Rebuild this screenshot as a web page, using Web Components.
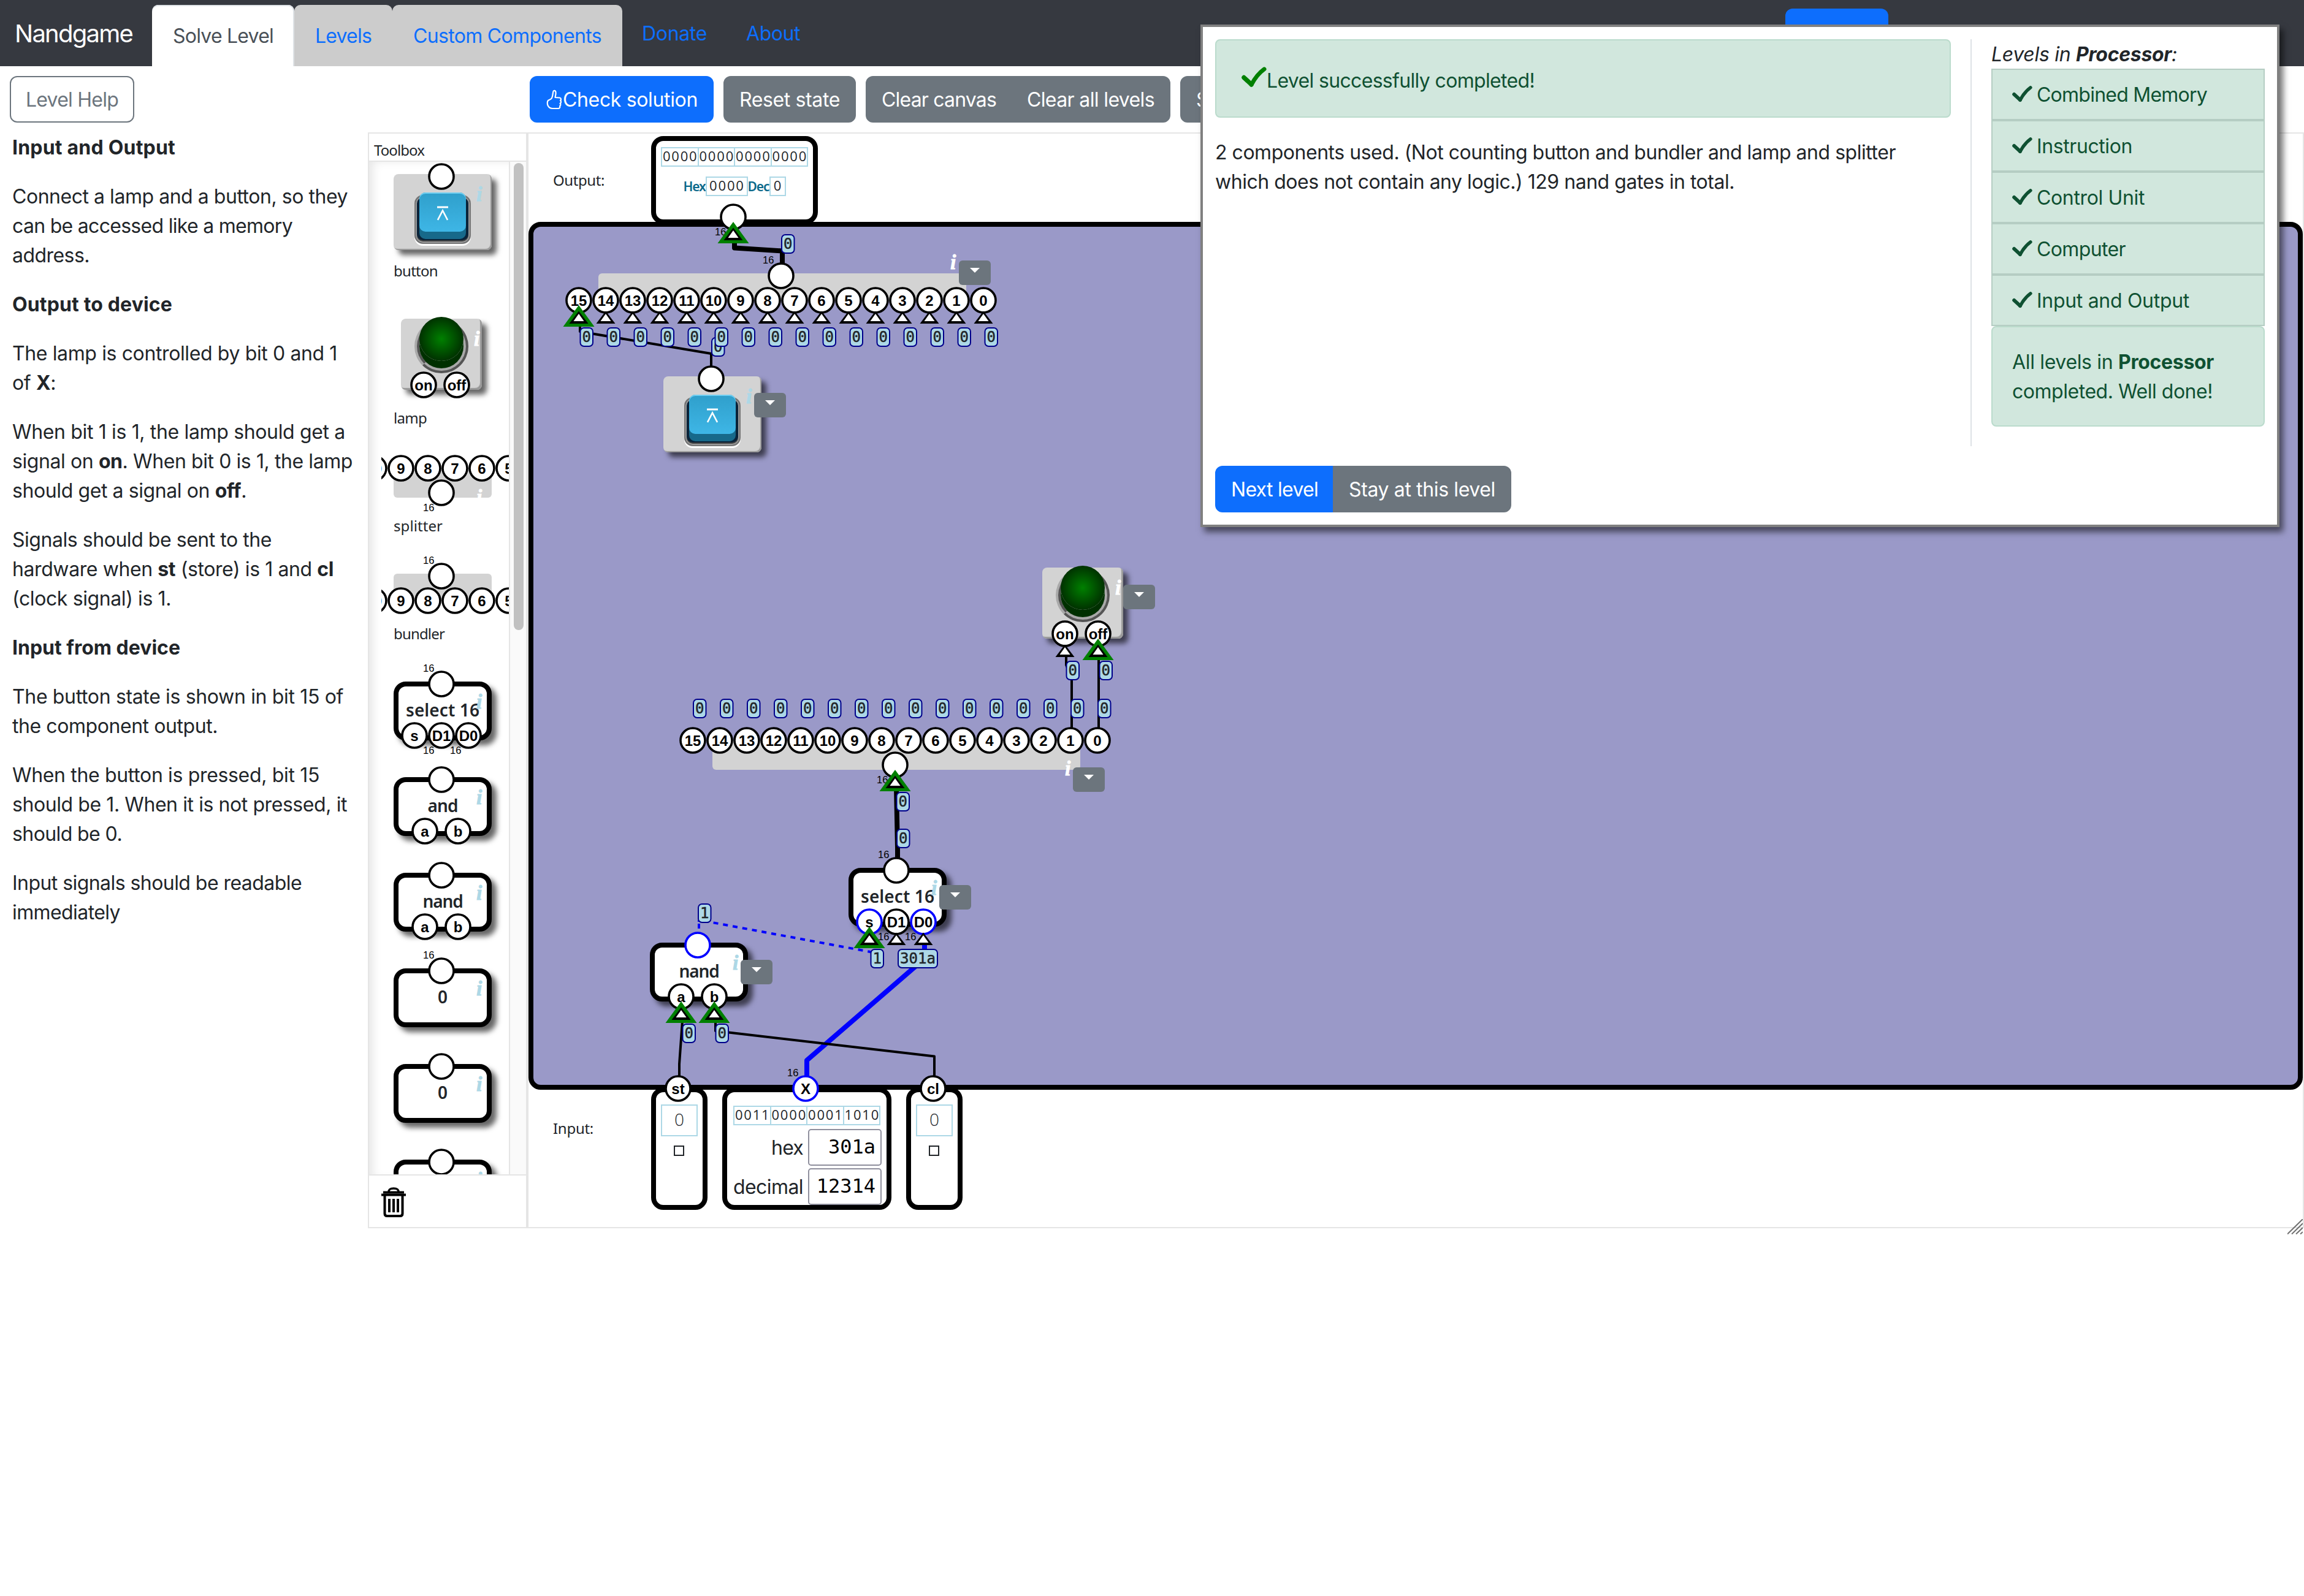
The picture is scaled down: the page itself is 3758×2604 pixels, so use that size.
<!DOCTYPE html>
<html lang="en">
<head>
<meta charset="utf-8">
<title>Nandgame</title>
<style>
html,body{margin:0;padding:0;background:#fff}
body{width:3758px;height:2604px;overflow:hidden;font-family:Inter,"Liberation Sans",sans-serif;font-size:32px;line-height:48px;color:#212529}
</style>
</head>
<body>
<nand-app></nand-app>

<script>
const make = (name, html, setup) => {
  const t = document.createElement('template');
  t.innerHTML = html;
  customElements.define(name, class extends HTMLElement {
    constructor() {
      super();
      this.attachShadow({ mode: 'open' }).appendChild(t.content.cloneNode(true));
    }
    connectedCallback() { if (setup && !this.ready) { this.ready = true; setup(this, this.shadowRoot); } }
  });
};
const num = (el, a, d = 0) => el.hasAttribute(a) ? +el.getAttribute(a) : d;
const place = el => { el.style.left = num(el, 'x') + 'px'; el.style.top = num(el, 'y') + 'px'; };

/* ---------- icons ---------- */
make('check-icon', `<style>:host{display:block;flex:none}svg{display:block;width:100%;height:100%}</style>
<svg viewBox="0 0 42 34" fill="none" stroke="currentColor" stroke-linecap="round" stroke-linejoin="round"><path d="M4 17.500 L16.500 29" stroke-width="7.500"/><path d="M16.500 29.500 C22 19 29 10 38 3.500" stroke-width="7"/></svg>`);

make('thumb-icon', `<style>:host{display:block;flex:none;width:28px;height:48px}svg{display:block}</style>
<svg width="28" height="48" viewBox="0 0 28 48" fill="none" stroke="currentColor" stroke-width="2.2" stroke-linejoin="round" stroke-linecap="round"><path d="M10 21 C12 17 11.500 13 12.500 10 C13.500 8 16 8.500 16.500 11 C17 14 16 17 15.500 20 L23 20.500 C25.500 21 25.500 24 24 25 C25.500 26 25.500 29 23.500 29.800 C25 31 24.500 33.500 23 34 C24 35.500 23 38 21 38 L11 38 C7 38 5 36 3.500 33 C2.500 30 2.500 27 4 25 C6 23.500 8.500 23.500 10 21 Z"/></svg>`);

make('trash-icon', `<style>:host{display:block}svg{display:block}</style>
<svg width="40" height="50" viewBox="0 0 40 50" fill="none" stroke="#000"><path d="M0 12.500H40" stroke-width="4"/><path d="M3 8.500H37" stroke-width="4"/><path d="M12 8 C12 3 15 2 20 2 C25 2 28 3 28 8" stroke-width="3.500"/><path d="M5.500 12 V43 Q5.500 47 9.500 47 H30.500 Q34.500 47 34.500 43 V12" stroke-width="4"/><path d="M13 19V41M20 19V41M27 19V41" stroke-width="4"/></svg>`);

/* ---------- top bar ---------- */
make('nav-tab', `<style>
:host{display:block;box-sizing:border-box;height:100px;padding:27px 34px 0;background:#ccc;color:#0d6efd;border-radius:10px 10px 0 0}
:host([active]){background:#fff;color:#495057;box-shadow:inset 0 2px 0 #dee2e6,inset -2px 0 0 #dee2e6}
</style><slot></slot>`);
make('nav-link', `<style>:host{display:block;padding:23px 32px 0;color:#0d6efd}</style><slot></slot>`);
make('nav-bar', `<style>
:host{display:flex;height:108px;box-sizing:border-box;padding-top:8px;background:#363940}
.brand{width:224px;padding:17px 0 0 24px;font-size:40px;line-height:60px;color:#fff}
.spacer{flex:1}
.login{width:168px;height:76px;margin:6px 678px 0 0;background:#0d6efd;border-radius:12px}
</style>
<div class="brand"><fit-text w="192">Nandgame</fit-text></div>
<nav-tab active><fit-text w="164">Solve Level</fit-text></nav-tab>
<nav-tab><fit-text w="92">Levels</fit-text></nav-tab>
<nav-tab><fit-text w="307">Custom Components</fit-text></nav-tab>
<nav-link><fit-text w="106">Donate</fit-text></nav-link>
<nav-link><fit-text w="88">About</fit-text></nav-link>
<div class="spacer"></div><div class="login"></div>`);

make('ui-button', `<style>
:host{display:flex;box-sizing:border-box;height:76px;padding:13px 24px 11px;border:2px solid #6c757d;background:#6c757d;color:#fff;border-radius:12px;white-space:nowrap}
:host([kind=primary]){background:#0d6efd;border-color:#0d6efd}
:host([kind=outline]){background:#fff;color:#6c757d}
:host([join=left]){border-radius:12px 0 0 12px}
:host([join=right]){border-radius:0 12px 12px 0;margin-left:-2px}
</style><slot></slot>`);

make('tool-bar', `<style>
:host{display:flex;height:108px;box-sizing:border-box;padding:16px}
.help{width:848px;display:flex}
.set{display:flex;margin-right:16px}
</style>
<div class="help"><ui-button kind="outline"><fit-text w="151">Level Help</fit-text></ui-button></div>
<div class="set"><ui-button kind="primary"><thumb-icon></thumb-icon><fit-text w="220">Check solution</fit-text></ui-button></div>
<div class="set"><ui-button><fit-text w="164">Reset state</fit-text></ui-button></div>
<div class="set"><ui-button join="left"><fit-text w="187">Clear canvas</fit-text></ui-button><ui-button join="right"><fit-text w="208">Clear all levels</fit-text></ui-button></div>
<ui-button>S</ui-button>`);

/* ---------- level description ---------- */
make('help-line', `<style>:host{display:block;height:48px}</style><slot></slot>`);
make('help-panel', `<style>
:host{display:block;width:580px;padding:1px 0 0 20px;flex:none}
p{margin:0 0 32px}
</style>
<p><b><help-line><fit-text w="266">Input and Output</fit-text></help-line></b></p>
<p><help-line><fit-text w="547">Connect a lamp and a button, so they</fit-text></help-line><help-line><fit-text w="457">can be accessed like a memory</fit-text></help-line><help-line><fit-text w="126">address.</fit-text></help-line></p>
<p><b><help-line><fit-text w="261">Output to device</fit-text></help-line></b></p>
<p><help-line><fit-text w="530">The lamp is controlled by bit 0 and 1</fit-text></help-line><help-line><fit-text w="71">of <b>X</b>:</fit-text></help-line></p>
<p><help-line><fit-text w="543">When bit 1 is 1, the lamp should get a</fit-text></help-line><help-line><fit-text w="555">signal on <b>on</b>. When bit 0 is 1, the lamp</fit-text></help-line><help-line><fit-text w="382">should get a signal on <b>off</b>.</fit-text></help-line></p>
<p><help-line><fit-text w="423">Signals should be sent to the</fit-text></help-line><help-line><fit-text w="524">hardware when <b>st</b> (store) is 1 and <b>cl</b></fit-text></help-line><help-line><fit-text w="259">(clock signal) is 1.</fit-text></help-line></p>
<p><b><help-line><fit-text w="274">Input from device</fit-text></help-line></b></p>
<p><help-line><fit-text w="540">The button state is shown in bit 15 of</fit-text></help-line><help-line><fit-text w="335">the component output.</fit-text></help-line></p>
<p><help-line><fit-text w="501">When the button is pressed, bit 15</fit-text></help-line><help-line><fit-text w="546">should be 1. When it is not pressed, it</fit-text></help-line><help-line><fit-text w="179">should be 0.</fit-text></help-line></p>
<p><help-line><fit-text w="472">Input signals should be readable</fit-text></help-line><help-line><fit-text w="176">immediately</fit-text></help-line></p>`);

/* ---------- diagram parts ---------- */
// Connector circle with optional arrow, bus width and value chip; x/y is the centre.
make('pin-dot', `<style>:host{position:absolute;display:block;width:0;height:0}svg{position:absolute;left:0;top:0;overflow:visible;width:1px;height:1px}
.n{font:700 24px "Liberation Sans",sans-serif;text-anchor:middle;fill:#000}
.w{font:400 16.500px "Liberation Sans",sans-serif;fill:#000}
.v{font:400 24px "DejaVu Sans Mono",monospace;text-anchor:middle;fill:#212529;stroke:#212529;stroke-width:.5px}</style><div></div>`,
(el, root) => {
  place(el);
  const lab = el.getAttribute('label') || '', val = el.getAttribute('val'), tri = el.getAttribute('tri'), bus = el.getAttribute('bus');
  const up = el.hasAttribute('up'), col = el.hasAttribute('on') ? '#00f' : '#000';
  let s = `<circle r="20" fill="#fff" stroke="${col}" stroke-width="3.6"/>`;
  if (lab) s += `<text class="n" y="8.5">${lab}</text>`;
  if (bus) s += `<text class="w" x="-30" y="${bus === 'top' ? -20.5 : 30}">16</text>`;
  if (tri === 'green') s += `<path d="M0 8L25.500 43H-25.500Z" fill="green"/>`;
  if (tri) s += `<path d="M0 17.500L15.500 38H-15.500Z" fill="#000"/><path d="M0 22L8.500 34H-8.500Z" fill="#fff"/>`;
  if (val) {
    const w = 8 + 14.5 * val.length, x = up ? 0 : 24 - w, y = up ? -68 : 44;
    s += `<rect x="${x + 1}" y="${y + 1}" width="${w - 2}" height="30" rx="6" fill="#add8e6" stroke="#00008b" stroke-width="2"/><text class="v" x="${x + w / 2}" y="${y + 24}">${val}</text>`;
  }
  root.querySelector('div').innerHTML = `<svg>${s}</svg>`;
});

// Sixteen numbered pins on one line.
make('pin-row', `<style>:host{position:absolute;display:block;width:0;height:0}</style><div></div>`,
(el, root) => {
  place(el);
  const from = num(el, 'from', 15), to = num(el, 'to', 0), up = el.hasAttribute('up') ? 'up' : '', tri = el.hasAttribute('tri'), val = el.hasAttribute('val') ? 'val="0"' : '';
  let s = '';
  for (let n = from, i = 0; n >= to; n--, i++)
    s += `<pin-dot x="${i * 44}" y="0" label="${n}" ${val} ${up} ${tri ? `tri="${n === 15 ? 'green' : 'plain'}"` : ''}></pin-dot>`;
  root.querySelector('div').innerHTML = s;
});

make('info-mark', `<style>:host{position:absolute;display:block;font:italic 700 34px/36px "Liberation Serif",serif;color:#add8e6;-webkit-text-stroke:.8px #add8e6;padding:2px 0 0 1px}:host([light]){color:#fff;-webkit-text-stroke-color:#fff}</style>i`, place);
make('menu-toggle', `<style>:host{position:absolute;display:flex;justify-content:center;box-sizing:border-box;padding-top:12px;width:52px;height:40px;background:#6c757d;border-radius:6px}i{width:0;height:0;border:8px solid transparent;border-top-color:#fff;border-bottom:0}</style><i></i>`, place);

make('gate-box', `<style>
:host{position:absolute;display:block;box-sizing:border-box;width:160px;height:96px;border:8px solid #000;border-radius:20px;background:#fff;box-shadow:8px 8px 8px rgba(0,0,0,.6);font:600 28px/36px "Noto Sans",sans-serif;text-align:center}
.t{position:absolute;left:-8px;width:160px;top:20px;white-space:nowrap}
</style><div class="t"><slot></slot></div><info-mark x="126" y="5"></info-mark>`, place);

make('bus-plate', `<style>:host{position:absolute;display:block;background:#d3d3d3;border-radius:6px}</style>`,
el => { place(el); el.style.width = num(el, 'w') + 'px'; el.style.height = num(el, 'h') + 'px'; });

make('push-button', `<style>
:host{position:absolute;display:block;width:160px;height:124px;background:#d3d3d3;border-radius:8px;box-shadow:8px 8px 8px rgba(0,0,0,.6),inset -2px -2px 1px #999}
div{position:absolute;box-sizing:border-box}
.well{left:34px;top:34px;width:92px;height:80px;border-radius:14px;background:#0a2339;border:2px solid #777;box-shadow:0 3px 0 #fff,inset 0 0 0 2px #999,inset 0 -2px 0 2px #444}
.side{left:42px;top:32px;width:76px;height:74px;border-radius:10px;background:#17698a}
.face{left:42px;top:30px;width:76px;height:64px;border-radius:10px;background:linear-gradient(#2f9fcb,#3eb6e6);box-shadow:inset 0 2px 0 #70cff2}
svg{position:absolute;left:71px;top:52px}
</style><div class="well"></div><div class="side"></div><div class="face"></div>
<svg width="18" height="24" viewBox="0 0 18 24" fill="none" stroke="#fff"><path d="M0 2H18" stroke-width="3"/><path d="M1 23L9 7.500L17 23" stroke-width="2.600"/></svg>
<info-mark x="134" y="13"></info-mark>`, place);

make('lamp-box', `<style>
:host{position:absolute;display:block;width:132px;height:116px;background:#d3d3d3;border-radius:8px;box-shadow:8px 8px 8px rgba(0,0,0,.6),inset -3px -3px 1px #999}
div{position:absolute;box-sizing:border-box}
.ring{left:22px;top:1px;width:88px;height:88px;border-radius:50%;border:8px ridge #a9a9a9}
.dome{left:30px;top:-3px;width:72px;height:72px;border-radius:50%;background:radial-gradient(circle closest-side,green,#003200);box-shadow:0 12px 0 #003000}
</style><div class="ring"></div><div class="dome"></div><info-mark light x="118" y="13"></info-mark>`, place);

make('port-box', `<style>:host{position:absolute;display:flex;flex-direction:column;align-items:center;box-sizing:border-box;border:8px solid #000;border-radius:20px;background:#fff}</style><slot></slot>`,
el => { place(el); el.style.width = num(el, 'w') + 'px'; el.style.height = num(el, 'h') + 'px'; });

make('bit-cells', `<style>
:host{display:flex;width:240px;height:32px;box-sizing:border-box;border:2px solid #add8e6;font:400 22px/24px "Open Sans",sans-serif}
span{flex:1 1 0;display:flex;justify-content:center;border-left:2px solid #add8e6}span:first-child,style+span{border-left:0}
i{font-style:normal;width:14.400px;text-align:center}
</style>`, (el, root) => {
  for (const g of el.getAttribute('bits').split(' ')) {
    const s = document.createElement('span');
    s.innerHTML = [...g].map(d => `<i>${d}</i>`).join('');
    root.appendChild(s);
  }
});

make('num-box', `<style>:host{display:block;box-sizing:border-box;height:32px;border:2px solid #add8e6;font:400 22px/24px "Open Sans",sans-serif}
:host([big]){width:60px;height:52px;font:300 28px/44px "Open Sans",sans-serif}
div{display:flex;justify-content:center}
i{font-style:normal;width:14.400px;display:flex;justify-content:center}</style><div></div>`,
(el, root) => { root.querySelector('div').innerHTML = [...el.getAttribute('value')].map(d => `<i>${d}</i>`).join(''); });

make('bit-input', `<style>:host{display:flex;flex-direction:column;align-items:center;padding-top:20px}
b{box-sizing:border-box;width:17px;height:17px;border:2px solid #212529;margin:15px 1px 0 0}</style><num-box big value="0"></num-box><b></b>`);

make('number-row', `<style>:host{display:flex;width:244px;height:60px;margin-top:4px;justify-content:flex-end;align-items:center}
.l{margin-right:8px;height:48px}
.f{box-sizing:border-box;width:120px;height:60px;border:2px solid #8f8f9d;border-radius:5px;font:400 32px/54px "DejaVu Sans Mono",monospace;color:#000;text-align:right;padding-right:8px}</style>
<div class="l"><slot></slot></div><div class="f"></div>`, (el, root) => { root.querySelector('.f').textContent = el.getAttribute('value'); });

/* ---------- toolbox ---------- */
make('tool-item', `<style>:host{display:block;position:relative;overflow:hidden;flex:none}
:host([clip]){margin-left:20px}
.l{position:absolute;left:40px;font:400 24px/32px "Noto Sans",sans-serif}:host([clip]) .l{left:20px}</style><slot></slot><div class="l"><fit-text></fit-text></div>`,
(el, root) => {
  el.style.height = num(el, 'h') + 'px';
  const l = root.querySelector('.l');
  if (!el.hasAttribute('label')) return l.remove();
  l.style.top = num(el, 'ly') + 'px';
  l.firstChild.textContent = el.getAttribute('label');
  l.firstChild.setAttribute('w', el.getAttribute('lw'));
});

make('tool-box', `<style>
:host{display:flex;flex-direction:column;box-sizing:border-box;width:262px;flex:none;border-left:2px solid #e5e5e5;border-right:4px solid #e5e5e5}
header{height:44px;border-bottom:2px solid #e5e5e5;padding-left:8px;font:400 24px/53px "Noto Sans",sans-serif}
main{display:flex;height:1652px}
.list{width:228px;overflow:hidden;display:flex;flex-direction:column;border-right:2px solid #e5e5e5;box-shadow:inset 12px 4px 16px -6px #e6e6e6}
.track{width:26px;background:#fafafa;padding:2px 0 0 6px;box-sizing:border-box}
.thumb{width:16px;height:762px;border-radius:8px;background:#c1c1c1}
footer{border-top:2px solid #e5e5e5;flex:1;padding:19px 20px}
</style>
<header><fit-text w="82">Toolbox</fit-text></header>
<main><div class="list">
<tool-item h="216" label="button" lw="72" ly="162"><push-button x="40" y="20"></push-button><pin-dot x="118" y="24"></pin-dot></tool-item>
<tool-item h="246" label="lamp" lw="54" ly="186"><lamp-box x="52" y="40"></lamp-box><pin-dot x="89" y="148" label="on"></pin-dot><pin-dot x="143" y="148" label="off"></pin-dot></tool-item>
<tool-item clip h="170" label="splitter" lw="80" ly="116"><bus-plate x="20" y="38" w="160" h="48"></bus-plate><tool-item style="position:absolute;left:0;top:0;width:208px;margin:0" h="86"><info-mark light x="154" y="65"></info-mark></tool-item><pin-row x="-12" y="38" from="10" to="5"></pin-row><pin-dot x="98" y="78" bus="bottom"></pin-dot></tool-item>
<tool-item clip h="184" label="bundler" lw="83" ly="122"><bus-plate x="20" y="40" w="160" h="44"></bus-plate><pin-row x="-12" y="84" from="10" to="5"></pin-row><pin-dot x="98" y="44" bus="top"></pin-dot></tool-item>
<tool-item h="156"><gate-box x="40" y="32"><fit-text w="120">select 16</fit-text></gate-box><pin-dot x="118" y="36" bus="top"></pin-dot><pin-dot x="74" y="120" label="s"></pin-dot><pin-dot x="118" y="120" label="D1" bus="bottom"></pin-dot><pin-dot x="162" y="120" label="D0" bus="bottom"></pin-dot></tool-item>
<tool-item h="156"><gate-box x="40" y="32"><fit-text w="49">and</fit-text></gate-box><pin-dot x="118" y="36"></pin-dot><pin-dot x="91" y="120" label="a"></pin-dot><pin-dot x="145" y="120" label="b"></pin-dot></tool-item>
<tool-item h="156"><gate-box x="40" y="32"><fit-text w="65">nand</fit-text></gate-box><pin-dot x="118" y="36"></pin-dot><pin-dot x="91" y="120" label="a"></pin-dot><pin-dot x="145" y="120" label="b"></pin-dot></tool-item>
<tool-item h="156"><gate-box x="40" y="32">0</gate-box><pin-dot x="118" y="36" bus="top"></pin-dot></tool-item>
<tool-item h="156"><gate-box x="40" y="32">0</gate-box><pin-dot x="118" y="36"></pin-dot></tool-item>
<tool-item h="56"><gate-box x="40" y="32"></gate-box><pin-dot x="118" y="36"></pin-dot></tool-item>
</div><div class="track"><div class="thumb"></div></div></main>
<footer><trash-icon></trash-icon></footer>`);

/* ---------- circuit canvas ---------- */
make('circuit-canvas', `<style>
:host{display:flex;flex-direction:column;flex:1;position:relative;font-family:"Noto Sans",sans-serif}
.row{font-size:24px;line-height:32px;padding-left:40px}
.out{height:144px;box-sizing:border-box;padding-top:60px}
.in{padding-top:47px}
.board{box-sizing:border-box;height:1416px;border:8px solid #000;border-radius:20px;background:#9a99c8}
/* node coordinates are counted from the page corner */
.plane{position:absolute;left:-862px;top:-218px;width:0;height:0}
.wires{position:absolute;left:0;top:0;width:3758px;height:2004px;fill:none;stroke:#000}
.hexdec{display:flex;margin-top:16px;font:600 21px/32px "Noto Sans",sans-serif;color:#0b698b}
.hexdec num-box{color:#212529}
.ui{font-family:Inter,sans-serif}
</style>
<div class="row out"><fit-text w="84">Output:</fit-text></div>
<div class="board"></div>
<div class="row in"><fit-text w="66">Input:</fit-text></div>
<div class="plane">
<port-box x="1062" y="222" w="272" h="144"><bit-cells bits="0000 0000 0000 0000" style="margin-top:10px"></bit-cells><div class="hexdec"><fit-text w="36">Hex</fit-text><num-box value="0000" style="width:69px"></num-box><fit-text w="35">Dec</fit-text><num-box value="0" style="width:27px"></num-box></div></port-box>
<port-box x="1062" y="1774" w="92" h="200"><bit-input></bit-input></port-box>
<port-box x="1178" y="1774" w="276" h="200"><bit-cells bits="0011 0000 0001 1010" style="margin-top:22px"></bit-cells><number-row value="301a" style="margin-top:6px"><fit-text class="ui" w="52">hex</fit-text></number-row><number-row value="12314"><fit-text class="ui" w="114">decimal</fit-text></number-row></port-box>
<port-box x="1478" y="1774" w="92" h="200"><bit-input></bit-input></port-box>

<bus-plate x="976" y="446" w="600" h="44"></bus-plate>
<push-button x="1082" y="614"></push-button>
<lamp-box x="1700" y="926"></lamp-box>
<bus-plate x="1162" y="1208" w="600" h="48"></bus-plate>
<gate-box x="1384" y="1416"><fit-text w="120">select 16</fit-text></gate-box>
<gate-box x="1060" y="1538"><fit-text w="65">nand</fit-text></gate-box>
<info-mark light x="1549" y="408"></info-mark><info-mark light x="1736" y="1234"></info-mark>
<menu-toggle x="1564" y="425"></menu-toggle><menu-toggle x="1230" y="641"></menu-toggle><menu-toggle x="1832" y="954"></menu-toggle><menu-toggle x="1750" y="1252"></menu-toggle><menu-toggle x="1532" y="1444"></menu-toggle><menu-toggle x="1208" y="1566"></menu-toggle>

<svg class="wires" viewBox="0 0 3758 2004" stroke-linejoin="round">
<path d="M1198 390V404.500L1276 409.500V432" stroke-width="8"/>
<path d="M946 530V541L1160 577V600" stroke-width="4"/>
<path d="M1739 1068V1085L1748 1106V1190" stroke-width="4"/>
<path d="M1792 1070V1190" stroke-width="4"/>
<path d="M1462 1284L1464 1384V1402" stroke-width="8"/>
<path d="M1508 1538V1564L1316 1730V1760" stroke="#00f" stroke-width="8"/>
<path d="M1140 1504V1501L1422 1553.500V1540" stroke="#00f" stroke-width="4" stroke-dasharray="8 8" stroke-dashoffset="5"/>
<path d="M1140 1515V1507" stroke="#00f" stroke-width="4"/>
<path d="M1113 1666L1108 1736V1760" stroke-width="4"/>
<path d="M1167 1666V1682L1524 1723.500V1760" stroke-width="4"/>
</svg>

<pin-dot x="1196" y="354" bus="bottom" tri="green"></pin-dot>
<pin-dot x="1160" y="618" up val="0"></pin-dot>
<pin-row x="944" y="490" tri val></pin-row>
<pin-dot x="1274" y="450" bus="top" up val="0"></pin-dot>
<pin-dot x="1737" y="1034" label="on" tri="plain" val="0"></pin-dot>
<pin-dot x="1791" y="1034" label="off" tri="green" val="0"></pin-dot>
<pin-row x="1130" y="1208" up val></pin-row>
<pin-dot x="1460" y="1248" bus="bottom" tri="green" val="0"></pin-dot>
<pin-dot x="1462" y="1420" bus="top" up val="0"></pin-dot>
<pin-dot x="1418" y="1504" label="s" on tri="green" val="1"></pin-dot>
<pin-dot x="1462" y="1504" label="D1" bus="bottom" tri="plain"></pin-dot>
<pin-dot x="1506" y="1504" label="D0" bus="bottom" on tri="plain" val="301a"></pin-dot>
<pin-dot x="1138" y="1542" on up val="1"></pin-dot>
<pin-dot x="1111" y="1626" label="a" tri="green" val="0"></pin-dot>
<pin-dot x="1165" y="1626" label="b" tri="green" val="0"></pin-dot>
<pin-dot x="1106" y="1776" label="st"></pin-dot>
<pin-dot x="1314" y="1776" label="X" bus="top" on></pin-dot>
<pin-dot x="1522" y="1776" label="cl"></pin-dot>
</div>`);

make('work-area', `<style>
:host{display:flex;position:relative;box-sizing:border-box;width:3158px;height:1788px;border:solid #e5e5e5;border-width:2px 2px 2px 0}
.grip{position:absolute;right:0;bottom:-12px;display:block}
</style><tool-box></tool-box><circuit-canvas></circuit-canvas>
<svg class="grip" width="25" height="25" viewBox="0 0 25 25" stroke="#707070" stroke-width="2" fill="none"><path d="M0 24.500L25 0M7 24.500L25 7M14 24.500L25 14M21 24.500L25 21"/></svg>`);

/* ---------- completion dialog ---------- */
make('success-note', `<style>:host{display:flex;box-sizing:border-box;border:2px solid #badbcc;background:#d1e7dd;color:#0f5132;border-radius:8px}</style><slot></slot>`);
make('level-item', `<style>:host{display:flex;box-sizing:border-box;height:84px;border:2px solid #b5cdc3;background:#d1e7dd;color:#0f5132;padding:17px 0 0 32px}
check-icon{width:33px;height:27px;margin:9px 7px 0 0}</style><check-icon></check-icon><slot></slot>`);
make('result-dialog', `<style>
:host{position:absolute;left:1958px;top:40px;width:1760px;height:820px;box-sizing:border-box;border:4px solid #808080;background:#fff;padding:20px;display:flex;flex-direction:column;box-shadow:6px 8px 10px rgba(0,0,0,.55)}
.body{display:flex;height:664px;margin-bottom:32px}
.left{width:1200px;padding-right:32px;border-right:2px solid #dee2e6}
.note{height:128px;padding:42px 0 0 41px;margin-bottom:33px}
.note check-icon{width:41px;height:34px;margin:1px 0 0;color:green}
.right{width:446px;margin-left:32px}
.done{padding:33px 32px 31px;display:block}
.line{height:48px}
.title{padding-top:1px;height:47px}
.foot{display:flex}
</style>
<div class="body"><div class="left">
<success-note class="note"><check-icon></check-icon><fit-text w="437">Level successfully completed!</fit-text></success-note>
<div class="line"><fit-text w="1110">2 components used. (Not counting button and bundler and lamp and splitter</fit-text></div>
<div class="line"><fit-text w="847">which does not contain any logic.) 129 nand gates in total.</fit-text></div>
</div><div class="right">
<div class="line title"><fit-text w="303"><i>Levels in <b>Processor</b>:</i></fit-text></div>
<level-item><fit-text w="278">Combined Memory</fit-text></level-item>
<level-item><fit-text w="156">Instruction</fit-text></level-item>
<level-item><fit-text w="176">Control Unit</fit-text></level-item>
<level-item><fit-text w="145">Computer</fit-text></level-item>
<level-item><fit-text w="249">Input and Output</fit-text></level-item>
<success-note class="done"><div class="line"><fit-text w="329">All levels in <b>Processor</b></fit-text></div><div class="line"><fit-text w="327">completed. Well done!</fit-text></div></success-note>
</div></div>
<div class="foot"><ui-button kind="primary" join="left"><fit-text w="142">Next level</fit-text></ui-button><ui-button join="right"><fit-text w="239">Stay at this level</fit-text></ui-button></div>`);

make('nand-app', `<style>:host{display:block;position:relative;width:3758px;height:2604px;overflow:hidden}.main{display:flex}</style>
<nav-bar></nav-bar><tool-bar></tool-bar><div class="main"><help-panel></help-panel><work-area></work-area></div><result-dialog></result-dialog>`);

// Spreads a single line of text over the given width by adjusting its tracking.
make('fit-text', `<style>:host{display:inline-block;white-space:nowrap;text-align:left}</style><slot></slot>`, el => {
  const w = num(el, 'w'), n = el.textContent.length;
  if (!w || !n) return;
  const natural = el.getBoundingClientRect().width;
  el.style.letterSpacing = ((w - natural) / n).toFixed(3) + 'px';
  el.style.width = w + 'px';
});
</script>
</body>
</html>
